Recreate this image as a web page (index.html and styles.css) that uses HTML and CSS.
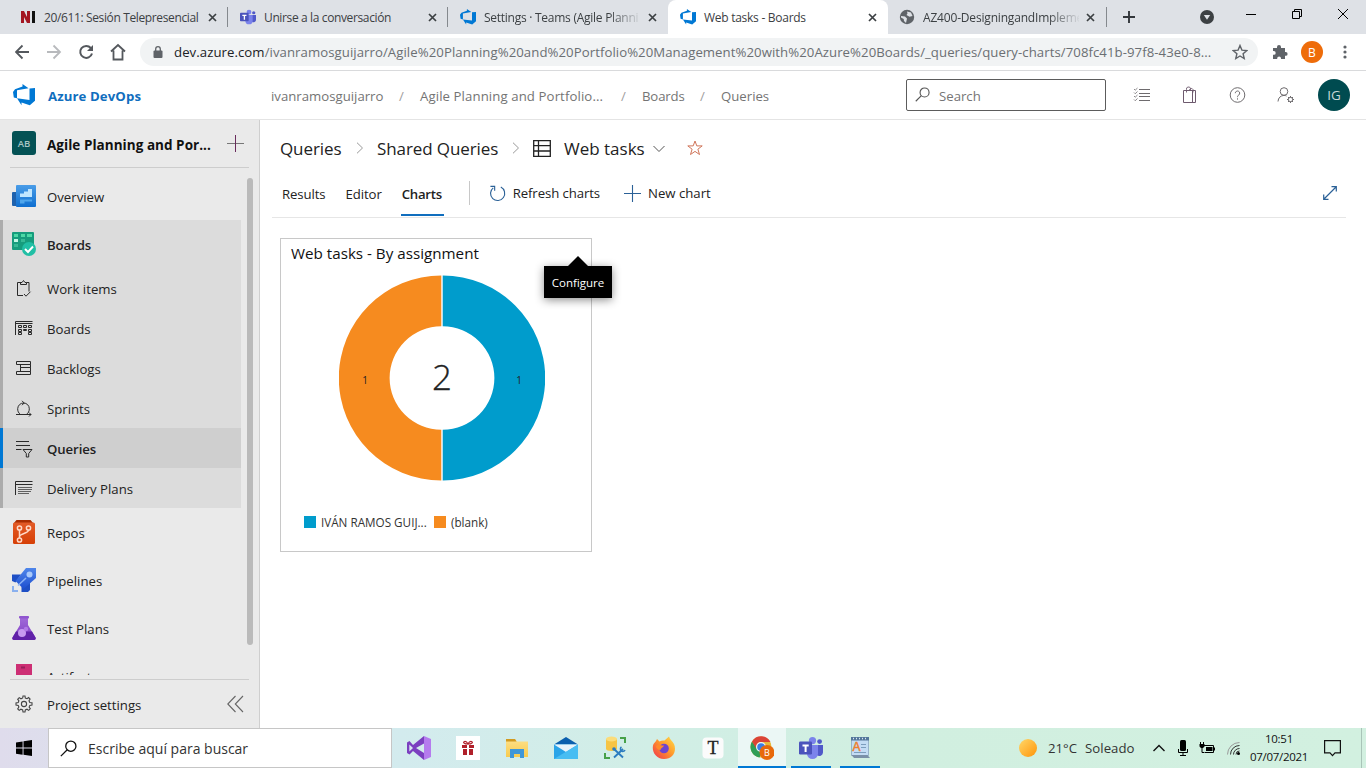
FILE: index.html
```html
<!DOCTYPE html>
<html lang="en">
<head>
<meta charset="utf-8">
<title>Web tasks - Boards</title>
<link rel="stylesheet" href="styles.css">
</head>
<body>
<svg width="0" height="0" class="defs">
  <defs>
    <linearGradient id="gBlue" x1="0" y1="0" x2="0" y2="1"><stop offset="0" stop-color="#4a9de8"/><stop offset="1" stop-color="#0f6fd0"/></linearGradient>
    <linearGradient id="gRed" x1="0" y1="0" x2="0" y2="1"><stop offset="0" stop-color="#e35b27"/><stop offset="1" stop-color="#d63f06"/></linearGradient>
    <linearGradient id="gRocket" x1="0" y1="0" x2="0" y2="1"><stop offset="0" stop-color="#4f86ea"/><stop offset="1" stop-color="#1d4fd0"/></linearGradient>
    <linearGradient id="gFlask" x1="0" y1="0" x2="0" y2="1"><stop offset="0" stop-color="#a06ad8"/><stop offset="1" stop-color="#7f3cc4"/></linearGradient>
    <linearGradient id="gSun" x1="0" y1="0" x2="1" y2="1"><stop offset="0" stop-color="#ffd86a"/><stop offset="1" stop-color="#ff9408"/></linearGradient>
    <linearGradient id="gFox" x1="1" y1="0" x2="0" y2="1"><stop offset="0" stop-color="#ffe04a"/><stop offset=".45" stop-color="#ff9a2b"/><stop offset="1" stop-color="#f0304f"/></linearGradient>
    <linearGradient id="gFolder" x1="0" y1="0" x2="0" y2="1"><stop offset="0" stop-color="#fde08a"/><stop offset="1" stop-color="#f8cb4e"/></linearGradient>
    <symbol id="devops" viewBox="0 0 22 22"><path fill="#0078d4" d="M0 8 2 5.200 9.500 2.500V0l6 4.200L4 6.300v8L.8 13.400zM22 4v12.800l-5.200 4.400-8.300-2.800v2.800L4 14.300l12.500 1.600V4.600z"/></symbol>
    <symbol id="teams" viewBox="0 0 24 24"><circle cx="13.500" cy="4.600" r="3.600" fill="#7b83eb"/><circle cx="20.600" cy="5.600" r="2.400" fill="#5059c9"/><path fill="#5059c9" d="M17 9h7v7.500a3.800 3.800 0 0 1-6 2.800z"/><path fill="#7b83eb" d="M8 9h11v8.500a5.500 5.500 0 0 1-11 0z"/><rect y="5.500" width="13" height="13" rx="1.200" fill="#4b53bc"/><path d="M3.500 8.500h6.200v1.900H7.600v5.700h-2v-5.700H3.500z" fill="#fff"/></symbol>
    <symbol id="close" viewBox="0 0 9 9"><path d="M1 1l7 7M8 1l-7 7" stroke="#3c4043" stroke-width="1.700" fill="none"/></symbol>
    <symbol id="search" viewBox="0 0 16 16"><circle cx="10.200" cy="5.800" r="4.800" fill="none" stroke="currentColor" stroke-width="1.200"/><path d="M6.800 9.200.800 15.200" stroke="currentColor" stroke-width="1.200"/></symbol>
    <symbol id="gear" viewBox="0 0 18 18"><g fill="none" stroke="currentColor" stroke-width="1.100"><circle cx="9" cy="9" r="2.600"/><path d="M7.700 3 8 1h2l.3 2 1.700.7 1.600-1.200 1.500 1.500L14 5.700l.8 1.800 2.200.3v2.300l-2.200.3-.7 1.700 1.200 1.700-1.600 1.600-1.700-1.200-1.700.7L10 17H8l-.3-2.100-1.800-.7-1.700 1.200-1.500-1.500L3.900 12l-.7-1.600L1 10.100V7.900l2.200-.3.7-1.800-1.200-1.600 1.500-1.600L6 3.800z"/></g></symbol>
  </defs>
</svg>
<div class="screen">
  <div class="tabstrip">
    <div class="tab"><svg class="fav" viewBox="0 0 16 16"><path d="M1 14V2h3l3 6V2h3v12H7L4 8v6z" fill="#a31621"/><path d="M12 2h3v12h-3z" fill="#111"/></svg><span class="tab-title"><span class="t">20/611: Sesión Telepresencial</span></span><svg class="x"><use href="#close"/></svg></div>
    <div class="tab"><svg class="fav"><use href="#teams"/></svg><span class="tab-title"><span class="t">Unirse a la conversación</span></span><svg class="x"><use href="#close"/></svg></div>
    <div class="tab nosep"><svg class="fav"><use href="#devops"/></svg><span class="tab-title fade"><span class="t c3">Settings · Teams (Agile Planni</span></span><svg class="x"><use href="#close"/></svg></div>
    <div class="tab nosep active"><svg class="fav"><use href="#devops"/></svg><span class="tab-title"><span class="t">Web tasks - Boards</span></span><svg class="x"><use href="#close"/></svg></div>
    <div class="tab last"><svg class="fav" viewBox="0 0 16 16"><circle cx="8" cy="8" r="7.200" fill="#5f6368"/><path d="M2 7l4 .5 2 2-1 4.500-2-2-.3-2L2 8.500zM8 2.500l4 1 1.500 3.500-3 .8L7.500 6l1-1.500z" fill="#dee1e6"/></svg><span class="tab-title fade"><span class="t c5">AZ400-DesigningandImpleme</span></span><svg class="x"><use href="#close"/></svg></div>
    <svg class="plus" viewBox="0 0 12 12"><path d="M6 0v12M0 6h12" stroke="#33373b" stroke-width="1.900"/></svg>
    <svg class="drop" viewBox="0 0 14 14"><circle cx="7" cy="7" r="7" fill="#3c4043"/><path d="M3.800 5h6.400L7 9.800z" fill="#dee1e6"/></svg>
    <svg class="winctl" viewBox="0 0 104 12"><g fill="none" stroke="#000"><path d="M0 6.500h10M46.500 3.500h7v7h-7zM48.500 3.500v-2h7v7h-2M92 1l10 10M102 1 92 11"/></g></svg>
  </div>

  <div class="toolbar">
    <svg class="nav" viewBox="0 0 112 18"><g fill="none" stroke-width="1.800"><path d="M14 9H1.500M7.500 2.500 1 9l6.500 6.500" stroke="#54585d"/><path d="M32 9h12.500M38.500 2.500 45 9l-6.500 6.500" stroke="#b8babd"/><path d="M75.800 5A6 6 0 1 0 77 10.500" stroke="#54585d" stroke-width="2"/><path d="M96 8.500 103 2l7 6.500M98.500 7.500v9h9v-9" stroke="#54585d"/></g><path d="M78 2v6h-6z" fill="#54585d"/></svg>
    <div class="omnibox">
      <svg class="lock" viewBox="0 0 10 12"><rect x=".5" y="4.500" width="9" height="7.500" rx="1" fill="#5f6368"/><path d="M2.700 5V3a2.300 2.300 0 0 1 4.600 0v2" fill="none" stroke="#5f6368" stroke-width="1.300"/></svg>
      <span class="t url"><b>dev.azure.com</b>/ivanramosguijarro/Agile%20Planning%20and%20Portfolio%20Management%20with%20Azure%20Boards/_queries/query-charts/708fc41b-97f8-43e0-8...</span>
      <svg class="star" viewBox="0 0 16 16"><path d="M8 1.500l1.900 4.600 4.900.4-3.700 3.200 1.100 4.800L8 12l-4.200 2.500 1.100-4.800L1.200 6.500l4.900-.4z" fill="none" stroke="#5f6368" stroke-width="1.400"/></svg>
    </div>
    <svg class="puzzle" viewBox="0 0 16 16"><path d="M1 4h4V3a2 2 0 0 1 4 0v1h4v4h.700a1.900 1.900 0 0 1 0 3.800H13V15H9v-.7a1.900 1.900 0 0 0-3.800 0v.7H1v-4.200h.8a1.900 1.900 0 0 0 0-3.800H1z" fill="#5f6368"/></svg>
    <span class="profile"><span class="t">B</span></span>
    <svg class="kebab" viewBox="0 0 4 14"><g fill="#5f6368"><circle cx="2" cy="2" r="1.600"/><circle cx="2" cy="7" r="1.600"/><circle cx="2" cy="12" r="1.600"/></g></svg>
  </div>

  <div class="appbar">
    <svg class="logo"><use href="#devops"/></svg>
    <span class="t brand">Azure DevOps</span>
    <div class="path"><span class="t p1">ivanramosguijarro</span><i>/</i><span class="t p2">Agile Planning and Portfolio...</span><i>/</i><span class="t p3">Boards</span><i>/</i><span class="t">Queries</span></div>
    <div class="searchbox"><svg class="s-ico"><use href="#search"/></svg><span class="t label">Search</span></div>
    <svg class="hi" viewBox="0 0 18 18"><g fill="none" stroke="#6e6b6e"><path d="M6 3.500h11M6 7.500h11M6 10.500h11M6 14.500h11"/><path d="M1 3l1.200 1.200L4.500 2M1 6.500l1.200 1.200 2.300-2.200M1 10l1.200 1.200L4.500 9M1 13.500l1.200 1.200 2.300-2.200" stroke-width=".8"/></g></svg>
    <svg class="hi" viewBox="0 0 18 18"><g fill="none" stroke="#6e5a6e"><path d="M2.500 4.500h12v12h-12zM11.500 4.500v12"/><path d="M5.500 6.500V3.500a2 2 0 0 1 4-1v2M8.500 4.500v-1a2 2 0 0 1 3.500 0v3" stroke-width=".9"/></g></svg>
    <svg class="hi" viewBox="0 0 18 18"><g fill="none" stroke="#6e6b6e"><circle cx="8.500" cy="9" r="7.300"/><path d="M6.300 7.200a2.200 2.200 0 1 1 3.600 1.700C9 9.600 8.500 9.900 8.500 11.200M8.500 12.300v1.300"/></g></svg>
    <svg class="hi" viewBox="0 0 18 18"><g fill="none" stroke="#6e6b6e"><circle cx="7" cy="5.500" r="3.800"/><path d="M1 15.500c.2-3.700 2.600-6 6-6.100 1 0 1.800.2 2.500.6"/><circle cx="13.500" cy="13.500" r="2.200"/><path d="M13.500 10v1.500M13.500 15.500V17M10 13.500h1.500M15.500 13.500H17M11 11l1 1M15 15l1 1M16 11l-1 1M12 15l-1 1"/></g></svg>
    <span class="avatar"><span class="t">IG</span></span>
  </div>

  <div class="body">
    <nav class="side">
      <div class="proj"><span class="badge"><span class="t">AB</span></span><span class="t pname">Agile Planning and Por...</span><svg class="padd" viewBox="0 0 17 17"><path d="M0 8.500h17" stroke="#777"/><path d="M8.500 0v17" stroke="#6a2c5c"/></svg></div>
      <div class="list">
        <div class="items">
          <div class="item"><svg viewBox="0 0 24 24"><rect y="8" width="12" height="14" rx="1" fill="#1f62ad"/><rect x="4" y="1" width="20" height="22" rx="1" fill="url(#gBlue)"/><path d="M8 13V9.500h4V7.500h4V5h4v8z" fill="#c0e6ff"/><path d="M8 15.500h12v2h-7.500v2H8z" fill="#4fa6ec"/></svg><span class="t label">Overview</span></div>
          <div class="group">
            <div class="item strong"><svg viewBox="0 0 24 24"><rect width="22" height="18" rx="1" fill="#169c7d"/><path d="M2 2h4v3H2zM9 2h4v3H9zM15 2h5v3h-5z" fill="#4cd9a6"/><path d="M2 7h4v3H2z" fill="#bff7e4"/><path d="M9 7h4v3H9zM2 12h4v3H2z" fill="#36b995"/><circle cx="17" cy="17" r="7" fill="#21bfa5"/><path d="M13 17l3 3 5-5.500" fill="none" stroke="#fff" stroke-width="1.900"/></svg><span class="t label">Boards</span></div>
            <div class="item sub"><svg viewBox="0 0 18 18"><path d="M8 15.500H2.500v-13h4M11.500 2.500h2.500v9M5.500 4.500v-2h1.500L8.500.500l1.500 2h1.500v2zM9 14l2 2.200 4.500-4.500" /></svg><span class="t label">Work items</span></div>
            <div class="item sub"><svg viewBox="0 0 18 18"><path d="M.500 15V1.500h17M.500 3.500h17M3.500 5.500h3v2h-3zM3.500 9.500h3v2h-3zM3.500 12.500h3v2h-3zM8.500 5.500h3v2h-3zM8.500 9.500h3v1h-3zM13.500 5.500h3v2h-3zM13.500 9.500h3v2h-3zM13.500 12.500h3v2h-3z"/></svg><span class="t label">Boards</span></div>
            <div class="item sub"><svg viewBox="0 0 18 18"><path d="M1.500 1.500h14v3h-14zM5.500 4.500h10v3h-10zM5.500 7.500h10v4h-10zM1.500 11.500h14v3h-14z"/></svg><span class="t label">Backlogs</span></div>
            <div class="item sub"><svg viewBox="0 0 18 18"><path d="M1 14.500h15M5.500 14.500C3.500 13 2.500 11 2.700 8.500 3 5.300 5.500 3 8.500 3c3.200 0 5.800 2.400 5.800 5.800 0 2.300-1 4.500-3 5.700M7 .800 9.200 3 7 5.200M14 12.500l2 2-2 2"/></svg><span class="t label">Sprints</span></div>
            <div class="item sub sel strong"><svg viewBox="0 0 18 18"><path d="M1 1.500h13M1 5.500h14M1 9.500h5.500M8 9.500h9l-3.300 4v3.500h-2.400v-3.500z"/></svg><span class="t label">Queries</span></div>
            <div class="item sub"><svg viewBox="0 0 18 18"><path d="M.500 15V1.500h17M1 4.500h16.500"/><path d="M3 7.500h14M3 9.500h14M3 11.500h13M3 13.500h11" stroke-width=".7"/></svg><span class="t label">Delivery Plans</span></div>
          </div>
          <div class="item"><svg viewBox="0 0 24 24"><path d="M4.500 0h14l3 3.500h-20z" fill="#a82d02"/><rect x="1" y="2.500" width="22" height="21.500" rx="1.500" fill="url(#gRed)"/><g fill="none" stroke="#ffd9c8" stroke-width="1.500"><circle cx="7.500" cy="8" r="2.100"/><circle cx="16.500" cy="8" r="2.100"/><circle cx="7.500" cy="20" r="2.100"/><path d="M7.500 10v8M16.500 10c0 4-9 3-9 7"/></g></svg><span class="t label">Repos</span></div>
          <div class="item"><svg viewBox="0 0 24 24"><path d="M0 6.500h9L3.500 14.500 0 13zM18 14v8l-2 2H9.500v-5z" fill="#1e4fc5"/><path d="M14 0h10v10L11.500 21 3.500 13z" fill="url(#gRocket)"/><circle cx="17.500" cy="6.500" r="3" fill="#a9c9fb"/><path d="M6 17.500 14 10" stroke="#8eb4f5" stroke-width="1.500"/><path d="M0 18h2v4h4v2H0z" fill="#8ab0ee"/></svg><span class="t label">Pipelines</span></div>
          <div class="item"><svg viewBox="0 0 24 24"><path d="M8 2h8v7l7.500 12.500a1.700 1.700 0 0 1-1.500 2.500H2A1.700 1.700 0 0 1 .5 21.500L8 9z" fill="url(#gFlask)"/><path d="M4 15.500h16l3.500 6a1.700 1.700 0 0 1-1.500 2.500H2A1.700 1.700 0 0 1 .5 21.500z" fill="#6122a8"/><rect x="7" width="10" height="2.500" rx=".8" fill="#9056cf"/><circle cx="10" cy="17" r="4" fill="#c79af0"/><circle cx="14" cy="13" r="2.200" fill="#b27be6"/></svg><span class="t label">Test Plans</span></div>
          <div class="item"><svg viewBox="0 0 24 24"><rect x="4" y="0" width="16" height="18" fill="#cd2f74"/><rect x="9" y="2.500" width="4" height="2" fill="#96205a"/></svg><span class="t label">Artifacts</span></div>
        </div>
        <div class="scrollbar"></div>
      </div>
      <div class="settings"><svg class="cog"><use href="#gear"/></svg><span class="t s13 label">Project settings</span><svg class="collapse" viewBox="0 0 17 18"><path d="M8.500 1 .800 9l7.700 8M16 1 8.300 9l7.700 8" fill="none" stroke="#666" stroke-width="1.100"/></svg></div>
    </nav>

    <main class="main">
      <div class="crumbs">
        <span class="t h1a">Queries</span><svg class="chev" viewBox="0 0 8 12"><path d="M1 .700 6.500 6 1 11.300" fill="none" stroke="#999"/></svg>
        <span class="t h1b">Shared Queries</span><svg class="chev" viewBox="0 0 8 12"><path d="M1 .700 6.500 6 1 11.300" fill="none" stroke="#999"/></svg>
        <svg class="grid-ico" viewBox="0 0 18 17"><path d="M.700.700h16.600v15.600H.700zM.700 5.700h16.600M.700 11h16.600M5.500.700v15.600" fill="none" stroke="#222" stroke-width="1.300"/></svg>
        <span class="t">Web tasks</span><svg class="down" viewBox="0 0 12 8"><path d="M.500 1 6 6.500 11.500 1" fill="none" stroke="#555"/></svg>
        <svg class="fave" viewBox="0 0 16 16"><path d="M8 1l1.800 4.900h5.400l-4.300 3.300 1.600 5.300L8 11.400l-4.500 3.100 1.600-5.300L.800 5.900h5.400z" fill="none" stroke="#d0755a"/></svg>
      </div>
      <div class="pivots">
        <span class="t v1">Results</span><span class="t v2">Editor</span><span class="current"><span class="t v3">Charts</span></span>
        <span class="vr"></span>
        <svg class="refresh" viewBox="0 0 18 18"><path d="M12.500 2.200A7.500 7.500 0 1 1 4.500 3M1.500 1.500h4.500v4.500" fill="none" stroke="#2b6197" stroke-width="1.200"/></svg><span class="t v4">Refresh charts</span>
        <svg class="newp" viewBox="0 0 17 17"><path d="M0 8.500h17M8.500 0v17" stroke="#2b6197" stroke-width="1.100"/></svg><span class="t">New chart</span>
        <svg class="expand" viewBox="0 0 14 14"><path d="M1 13 13 1M8.500.700h4.800v4.800M.700 8.500v4.800h4.800" fill="none" stroke="#2b6197" stroke-width="1.200"/></svg>
      </div>
      <section class="card">
        <div class="card-title"><span class="t">Web tasks - By assignment</span></div>
        <svg class="donut" viewBox="0 0 206 206"><path d="M103.700.500a102.500 102.500 0 0 1 0 205V154.700a51.700 51.700 0 0 0 0-103.400z" fill="#009ccc"/><path d="M102.300.500a102.500 102.500 0 0 0 0 205V154.700a51.700 51.700 0 0 1 0-103.400z" fill="#f68b1f"/><text x="26" y="109" class="n">1</text><text x="180" y="109" class="n">1</text><text x="103" y="115" class="total">2</text></svg>
        <div class="legend"><i class="blue"></i><span class="t k2">IVÁN RAMOS GUIJ...</span><i class="orange"></i><span class="t">(blank)</span></div>
        <div class="tooltip"><span class="t">Configure</span></div>
      </section>
    </main>
  </div>

  <div class="taskbar">
    <div class="start"><svg viewBox="0 0 16 16"><path d="M0 2.400 6.600 1.400V7.600H0zM7.500 1.300 16 0v7.600H7.500zM0 8.500h6.600v6.200L0 13.700zM7.500 8.500H16V16l-8.500-1.200z" fill="#000"/></svg></div>
    <div class="tsearch"><svg><use href="#search"/></svg><span class="t">Escribe aquí para buscar</span></div>
    <div class="apps">
      <div class="app"><svg viewBox="0 0 24 24"><path d="M0 6.500 2.500 5 6 9l11-9v7.500L9 12l8 5v7L6 15l-3.500 3.500L0 17z" fill="#7b3fc0"/><path d="M17 0l7 3v18l-7 3z" fill="#b57bee"/><path d="M2.300 8.500 6 12l-3.700 3.500z" fill="#d8e6f0"/></svg></div>
      <div class="app"><svg viewBox="0 0 24 24"><rect width="24" height="24" fill="#fff"/><path d="M6 9h5v3H6zM13 9h5v3h-5zM7 13h4v6H7zM13 13h4v6h-4z" fill="#b0202a"/><path d="M12 8C8 8 6.500 6 8.500 5.500S12 8 12 8s1.500-3 3.500-2.500S16 8 12 8z" fill="none" stroke="#b0202a" stroke-width="1.200"/></svg></div>
      <div class="app"><svg viewBox="0 0 24 24"><path d="M1 3h9l2 2.500h11V21H1z" fill="url(#gFolder)"/><path d="M1 3h9l1.500 2.500H1z" fill="#d29a20"/><path d="M5 13h14v9h-4v-4H9v4H5z" fill="#3f97d8"/></svg></div>
      <div class="app"><svg viewBox="0 0 24 24"><path d="M0 8.500 12 1l12 7.500z" fill="#0b5fae"/><path d="M0 8.500h24V23H0z" fill="#2aa4e8"/><path d="M0 8.500h24L12 16z" fill="#e9f4fb"/><path d="M0 23 24 8.500V23z" fill="#48bdf2"/></svg></div>
      <div class="app"><svg viewBox="0 0 24 24"><path d="M3 3v10c0 2.500 11 2.500 11 0V3z" fill="#f6c445"/><ellipse cx="8.500" cy="3" rx="5.500" ry="2.500" fill="#fbdc7a"/><path d="M17 2h5v5M2 17v5h5" fill="none" stroke="#46a148" stroke-width="2"/><path d="M11 21.500l9-8.500M11 13l9 8.500" stroke="#2c7cc0" stroke-width="1.900"/><circle cx="11" cy="13" r="1.800" fill="#2c7cc0"/><path d="M18.500 11a2.400 2.400 0 1 0 3.500 3" fill="none" stroke="#2c7cc0" stroke-width="1.500"/></svg></div>
      <div class="app"><svg viewBox="0 0 24 24"><path d="M4 5l1-2 2.500 2.500C9 4.500 11 4.200 12.500 4.500L17 .5c.5 2.500 3 4 5 7.500 3 7-1 15-10 15S-1 14 1.500 8z" fill="url(#gFox)"/><circle cx="12" cy="12.500" r="4.800" fill="#6d45cf"/><path d="M4 10c3-3 5 0 8-.500-1 2.500-3 2-3.500 4.500C6 14 4 12 4 10z" fill="#ff8a2b"/></svg></div>
      <div class="app"><svg viewBox="0 0 24 24"><rect x="1.500" y="1.500" width="21" height="21" rx="4" fill="#fbfbfb"/><text x="12" y="18" class="serif">T</text></svg></div>
      <div class="app run hot"><svg viewBox="0 0 24 24"><circle cx="11" cy="11" r="10.500" fill="#e9b93a"/><path d="M2 5.500A10.500 10.500 0 0 0 9.500 21.400L13 14 7 12z" fill="#2f9e57"/><path d="M2 5.500A10.500 10.500 0 0 1 20.500 6H11a5 5 0 0 0-4.500 7z" fill="#db4437"/><circle cx="11" cy="11" r="5" fill="#eef6fc"/><circle cx="11" cy="11" r="3.800" fill="#3c7de6"/><circle cx="17" cy="16.500" r="7.500" fill="#e8690b"/><text x="17" y="20" class="bb">B</text></svg></div>
      <div class="app run"><svg><use href="#teams"/></svg></div>
      <div class="app run"><svg viewBox="0 0 24 24"><path d="M3.500 2h17v17.500H3.500z" fill="#c3dcf4" stroke="#8aa6c0" stroke-width=".8"/><path d="M3 1h18v3.500H3z" fill="#54779b"/><path d="M5.500 1.800v1.500M8.500 1.800v1.500M11.500 1.800v1.500M14.500 1.800v1.500M17.500 1.800v1.500" stroke="#d8e6f2"/><text x="4.500" y="15" class="aa">A</text><path d="M13 8.500h5M13 11.500h5M6 16.500h12" stroke="#7c9dbd"/><path d="M3.500 19h16l2.500 3H6z" fill="#7a90a8"/></svg></div>
    </div>
    <div class="tray">
      <svg class="sun" viewBox="0 0 18 18"><circle cx="9" cy="9" r="9" fill="url(#gSun)"/></svg>
      <span class="t w2">21°C</span><span class="t w3">Soleado</span>
      <svg class="up" viewBox="0 0 12 8"><path d="M.500 7 6 1.500 11.500 7" fill="none" stroke="#111" stroke-width="1.400"/></svg>
      <svg class="mic" viewBox="0 0 12 16"><rect x="3" width="6" height="11" rx="1.500" fill="#000"/><path d="M1.500 9v3.500h9V9M6 12.500V16M3 15.500h6" fill="none" stroke="#000"/></svg>
      <svg class="bat" viewBox="0 0 16 12"><path d="M4.500 3.500h10v7h-9M15.500 5.500v3" fill="none" stroke="#000"/><path d="M7 5h6.500v4H7zM.500 2h5v2.500l-1.500 1.500H2L.5 4.500z" fill="#000"/><path d="M1.500 0v2M4.500 0v2M3 6v4.500h2" stroke="#000" fill="none"/></svg>
      <svg class="wifi" viewBox="0 0 13 13"><g fill="none" stroke="#333"><path d="M.500 12.500A12 12 0 0 1 12.500.500" stroke="#999"/><path d="M3.500 12.500a9 9 0 0 1 9-9M6.500 12.500a6 6 0 0 1 6-6M9 12.500A3.500 3.500 0 0 1 12.500 9"/></g><circle cx="11.500" cy="11.500" r="1.500" fill="#000"/></svg>
      <div class="clock"><span class="t">10:51</span><span class="t">07/07/2021</span></div>
      <svg class="note" viewBox="0 0 17 17"><path d="M.600.600h15.800v12.300h-5.400L8.500 15.600 6 12.900H.600z" fill="none" stroke="#111" stroke-width="1.200"/></svg>
      <span class="peek"></span>
    </div>
  </div>
</div>
</body>
</html>
```
FILE: styles.css
```css
* { box-sizing: border-box; }
body { margin: 0; background: #fff; font-family: "Open Sans", "Noto Sans", sans-serif; color: #222; }
.screen { width: 1366px; height: 768px; display: flex; flex-direction: column; overflow: hidden; }
svg { display: block; flex: none; }
.defs { position: absolute; }
.t { white-space: nowrap; }

.tabstrip { height: 34px; background: #dee1e6; display: flex; align-items: center; padding-left: 8px; font-size: 12px; letter-spacing: -.37px; color: #3c4043; flex: none; }
.tab { width: 220px; height: 34px; display: flex; align-items: center; padding-left: 12px; background-image: linear-gradient(#85898e, #85898e); background-size: 1px 20px; background-position: right 7px; background-repeat: no-repeat; flex: none; }
.tab.nosep { background-image: none; }
.tab.active { background: #fff; border-radius: 8px 8px 0 0; letter-spacing: -.27px; }
.tab.last { width: 219px; padding-left: 11px; }
.fav { width: 16px; height: 16px; }
.tab-title { width: 156px; margin-left: 8px; margin-right: 8px; display: flex; }
.tab-title.fade { -webkit-mask-image: linear-gradient(90deg, #000 125px, transparent 158px); mask-image: linear-gradient(90deg, #000 125px, transparent 158px); }
.c3 { letter-spacing: -.26px; }
.c5 { letter-spacing: -.18px; }
.x { width: 9px; height: 9px; }
.tab.last .x { margin-left: -1px; }
.plus { width: 12px; height: 12px; margin-left: 16px; }
.drop { width: 14px; height: 14px; margin-left: 65px; }
.winctl { width: 104px; height: 12px; margin-left: 32px; margin-top: -6px; }

.toolbar { height: 37px; border-bottom: 1px solid #d9dadc; display: flex; align-items: center; padding-left: 15px; flex: none; }
.nav { width: 112px; height: 18px; }
.omnibox { margin-left: 13px; width: 1118px; height: 28px; border-radius: 14px; background: #f1f3f4; display: flex; align-items: center; padding-left: 13px; }
.lock { width: 10px; height: 12px; }
.url { margin-left: 11px; font-size: 13.200px; letter-spacing: .06px; color: #6b6f73; width: 1058px; }
.url b { font-weight: 400; color: #202124; }
.star { width: 16px; height: 16px; }
.puzzle { width: 16px; height: 16px; margin-left: 14px; }
.profile { width: 22px; height: 22px; border-radius: 50%; background: #ee6c0a; color: #fff; font-size: 12px; display: flex; align-items: center; justify-content: center; margin-left: 13px; }
.kebab { width: 4px; height: 14px; margin-left: 20px; }

.appbar { height: 49px; border-bottom: 1px solid #e4e4e4; display: flex; align-items: center; padding-left: 13px; font-size: 13.200px; color: #747474; flex: none; }
.logo { width: 22px; height: 22px; }
.brand { font-weight: 700; color: #106ebe; margin-left: 13px; width: 223px; padding-top: 2px; letter-spacing: .1px; }
.path { display: flex; width: 635px; padding-top: 2px; }
.path i { font-style: normal; color: #a0a0a0; width: 37px; text-align: center; }
.p1 { width: 112px; }
.p2 { width: 185px; letter-spacing: .1px; }
.p3 { width: 42px; letter-spacing: -.15px; }
.searchbox { width: 200px; height: 32px; border: 1px solid #5c5c5c; border-radius: 2px; display: flex; align-items: center; padding-left: 8px; color: #757575; }
.label { padding-top: 2px; }
.s-ico { width: 15px; height: 15px; margin-right: 9px; margin-top: -1px; color: #555; }
.hi { width: 18px; height: 18px; margin-left: 30px; }
.searchbox + .hi { margin-left: 27px; }
.avatar { width: 32px; height: 32px; border-radius: 50%; background: #004b50; color: #c8d8d8; font-size: 13.500px; display: flex; align-items: center; justify-content: center; margin-left: 23px; }

.body { flex: 1; min-height: 0; display: flex; }
.side { width: 260px; background: #eaeaea; border-right: 1px solid #cfcfcf; display: flex; flex-direction: column; font-size: 13.200px; }
.proj { height: 48px; margin: 0 10px; border-bottom: 1px solid #cdcdcd; display: flex; align-items: center; padding-left: 2px; flex: none; }
.badge { width: 24px; height: 24px; background: #045255; border-radius: 3px; color: #a9c4c4; font-size: 9.500px; font-weight: 600; display: flex; align-items: center; justify-content: center; margin-top: -1px; }
.pname { font-weight: 700; color: #111; margin-left: 11px; width: 180px; font-size: 13.500px; letter-spacing: .04px; padding-top: 2px; }
.padd { width: 17px; height: 17px; margin-top: -1px; }
.list { height: 507px; display: flex; padding-top: 4px; overflow: hidden; flex: none; }
.items { width: 241px; }
.item { height: 48px; display: flex; align-items: center; padding-left: 12px; }
.item svg { width: 24px; height: 24px; margin-right: 11px; }
.item.strong { font-weight: 600; letter-spacing: -.1px; }
.group { background: #dcdcdc; border-left: 3px solid #acacac; }
.group .item { padding-left: 9px; }
.group .item.sub { height: 40px; padding-left: 12px; }
.item.sub svg { width: 18px; height: 18px; margin-right: 14px; margin-top: 2px; fill: none; stroke: #2a2a2a; stroke-width: 1; }
.group .item.sel { background: #cfcfcf; border-left: 3px solid #0078d4; margin-left: -3px; }
.scrollbar { width: 6px; height: 467px; border-radius: 3px; background: #bababa; margin: 6px 0 0 6px; }
.settings { flex: 1; margin: 4px 10px 0; border-top: 1px solid #cdcdcd; display: flex; align-items: center; padding-left: 5px; }
.cog { width: 18px; height: 18px; color: #444; }
.s13 { margin-left: 14px; width: 180px; }
.collapse { width: 17px; height: 18px; }

.main { flex: 1; padding-left: 12px; min-width: 0; }
.crumbs { height: 58px; display: flex; align-items: center; padding: 0 0 2px 8px; font-size: 17px; color: #222; }
.h1a { width: 63px; letter-spacing: -.1px; }
.h1b { width: 122px; letter-spacing: -.1px; }
.chev { width: 8px; height: 12px; margin: 0 13px; }
.grid-ico { width: 18px; height: 17px; margin-right: 13px; }
.down { width: 12px; height: 8px; margin-left: 8px; margin-top: 2px; }
.fave { width: 16px; height: 16px; margin-left: 22px; }
.pivots { height: 40px; width: 1074px; border-bottom: 1px solid #e6e6e6; display: flex; align-items: center; padding: 0 0 9px 10px; font-size: 13.200px; }
.v1, .v2, .v3 { padding-top: 1px; letter-spacing: -.1px; }
.v2 { margin: 0 19px 0 20px; }
.v3 { letter-spacing: -.25px; }
.current { width: 43px; height: 33px; border-bottom: 2px solid #106ebe; display: flex; align-items: center; padding: 0 0 9px 1px; margin-bottom: -12px; font-weight: 600; }
.vr { width: 1px; height: 24px; background: #c8c8c8; margin: 0 19px 0 25px; }
.refresh, .newp { width: 17px; height: 17px; margin-right: 7px; }
.v4 { letter-spacing: -.1px; }
.newp { margin-left: 24px; }
.expand { width: 14px; height: 14px; margin-left: auto; margin-right: 9px; }
.card { position: relative; width: 312px; height: 314px; border: 1px solid #c8c8c8; margin: 20px 0 0 8px; display: flex; flex-direction: column; align-items: flex-start; }
.card-title { font-size: 15.200px; line-height: 20px; height: 36px; padding: 4px 0 0 10px; color: #111; }
.donut { width: 206px; height: 206px; margin-left: 58px; }
.n { font-size: 10px; text-anchor: middle; fill: #222; }
.total { font-size: 35px; text-anchor: middle; fill: #222; font-weight: 300; stroke: #222; stroke-width: .3; }
.legend { display: flex; align-items: center; margin: 31px 0 0 23px; height: 20px; font-size: 11.700px; color: #333; }
.legend i { width: 12px; height: 12px; margin-right: 5px; }
.blue { background: #009ccc; }
.orange { background: #f68b1f; }
.k2 { width: 113px; }
.tooltip { position: absolute; left: 263px; top: 27px; width: 68px; height: 32px; background: #000; color: #fff; font-size: 11.500px; display: flex; align-items: center; justify-content: center; box-shadow: 0 2px 10px rgba(0,0,0,.45); }
.tooltip::before { content: ""; position: absolute; left: 24px; top: -10px; border: 10px solid transparent; border-top: 0; border-bottom-color: #000; }

.taskbar { height: 40px; flex: none; display: flex; background: linear-gradient(90deg, #dfdcec 0, #d3ebee 400px, #d1eee6 650px, #d1efe0 900px, #d2f0e0 100%); }
.start { width: 48px; display: flex; align-items: center; justify-content: center; }
.start svg { width: 16px; height: 16px; }
.tsearch { width: 344px; background: #fff; border: 1px solid #c6c6c6; display: flex; align-items: center; padding-left: 11px; color: #333; font-size: 14px; }
.tsearch svg { width: 17px; height: 17px; color: #111; margin-right: 11px; }
.apps { display: flex; padding-left: 3px; }
.app { width: 48px; margin-right: 1px; display: flex; align-items: center; justify-content: center; }
.app svg { width: 24px; height: 24px; }
.run { border-bottom: 2px solid #0078d4; width: 40px; margin: 0 5px 0 4px; padding-top: 2px; }
.run.hot { width: 48px; margin: 0 1px 0 0; background: #ebf7f5; }
.serif { font: 400 18px "Liberation Serif", serif; text-anchor: middle; fill: #222; stroke: #222; stroke-width: .3; }
.bb { font-size: 9px; text-anchor: middle; fill: #fff; }
.aa { font: 400 12px "Liberation Sans", sans-serif; fill: #ee7f2d; stroke: #ee7f2d; stroke-width: .5; }
.tray { margin-left: auto; width: 347px; display: flex; align-items: center; font-size: 13.200px; color: #333; }
.sun { width: 18px; height: 18px; }
.w2 { margin-left: 11px; width: 37px; }
.w3 { width: 68px; letter-spacing: .05px; }
.up { width: 12px; height: 8px; }
.mic { width: 12px; height: 16px; margin-left: 12px; }
.bat { width: 16px; height: 12px; margin-left: 10px; }
.wifi { width: 13px; height: 13px; margin-left: 12px; }
.clock { width: 78px; display: flex; flex-direction: column; align-items: center; font-size: 11.500px; letter-spacing: -.28px; line-height: 18px; color: #111; padding-bottom: 1px; }
.note { width: 17px; height: 17px; margin-left: 6px; }
.peek { width: 1px; height: 40px; background: #a9c4b8; margin-left: auto; margin-right: 4px; }
```
